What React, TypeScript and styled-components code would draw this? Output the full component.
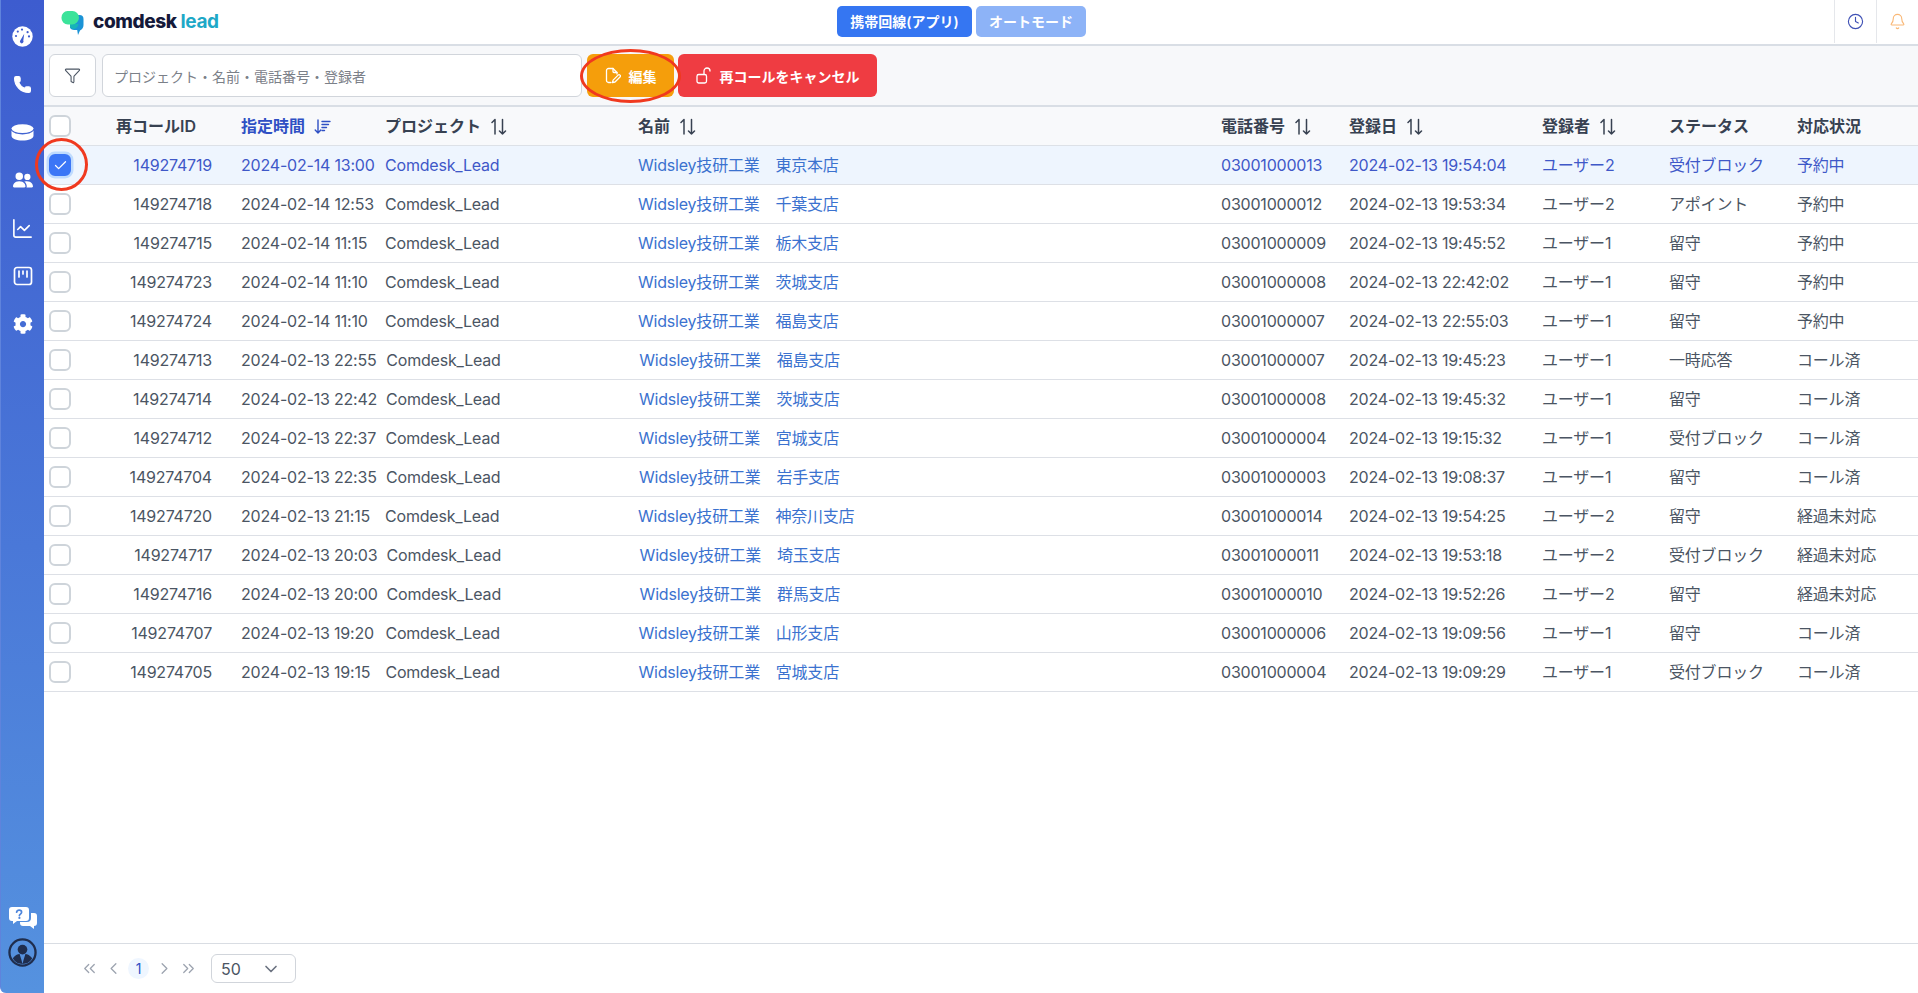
import React from "react";
import styled, { createGlobalStyle } from "styled-components";
import { Filter, Clock, Bell, Phone, ChartLine, ChevronDown, ChevronLeft, ChevronRight, ChevronsLeft, ChevronsRight, Check } from "lucide-react";
import { FaCog } from "react-icons/fa";

const FONT = `Inter, "Noto Sans CJK JP", sans-serif`;

const Global = createGlobalStyle`
  html, body { margin: 0; padding: 0; height: 100%; background: #4a4a22; }
  #root { height: 100%; }
  * { box-sizing: border-box; }
  body { font-family: ${FONT}; overflow: hidden; }
`;

const Page = styled.div`
  display: flex;
  height: 993px;
  width: 1918px;
  background: #fff;
`;

const Sidebar = styled.nav`
  width: 44px;
  flex: none;
  display: flex;
  flex-direction: column;
  align-items: center;
  padding: 13px 0 26px;
  background: linear-gradient(180deg, #3d5ccf 0%, #4a78d8 55%, #5592df 100%);
  border-left: 1px solid #5f83dc;
  border-bottom-left-radius: 6px;
  color: #fff;
`;

const NavItem = styled.div`
  height: 47.8px;
  width: 100%;
  display: flex;
  align-items: center;
  justify-content: center;
`;

const SideBottom = styled.div`
  margin-top: auto;
  display: flex;
  flex-direction: column;
  align-items: center;
  gap: 9px;
`;

const Main = styled.div`
  flex: 1;
  min-width: 0;
  display: flex;
  flex-direction: column;
  background: #fff;
`;

const Header = styled.header`
  height: 46px;
  flex: none;
  display: grid;
  grid-template-columns: 793px auto 1fr;
  align-items: center;
  background: #fff;
  border-bottom: 2px solid #d9dee5;
`;

const Logo = styled.div`
  display: flex;
  align-items: center;
  padding-left: 17px;
  gap: 9px;
  height: 100%;
`;

const LogoText = styled.span`
  font-family: "Inter", sans-serif;
  font-size: 19px;
  font-weight: 800;
  color: #14193a;
  letter-spacing: -0.4px;
  margin-top: -2px;
`;

const LogoLead = styled.span`
  color: #1ea8c7;
  font-weight: 700;
  margin-left: 4px;
`;

const ModeGroup = styled.div`
  display: flex;
  gap: 4px;
  margin-top: -2px;
`;

const ModeButton = styled.button<{ $muted?: boolean }>`
  height: 31px;
  padding: 0;
  width: ${(p) => (p.$muted ? "110px" : "135px")};
  border: 0;
  border-radius: 5px;
  background: ${(p) => (p.$muted ? "#8db3f7" : "#3576f2")};
  color: #fff;
  font-family: ${FONT};
  font-size: 14px;
  font-weight: 600;
`;

const HeaderRight = styled.div`
  justify-self: end;
  display: flex;
  height: 100%;
`;

const HeaderIcon = styled.div<{ $w: number }>`
  width: ${(p) => p.$w}px;
  height: 43px;
  display: flex;
  align-items: center;
  justify-content: center;
  border-left: 1px solid #e5e7eb;
`;

const Toolbar = styled.div`
  height: 61px;
  flex: none;
  display: flex;
  align-items: flex-start;
  padding: 8px 0 0 5px;
  background: #f7f8fa;
  border-bottom: 2px solid #d9dee5;
`;

const FilterButton = styled.button`
  width: 47px;
  height: 43px;
  display: flex;
  align-items: center;
  justify-content: center;
  padding: 0;
  border: 1px solid #d1d5db;
  border-radius: 6px;
  background: #fff;
  color: #4b5563;
`;

const SearchBox = styled.div`
  width: 480px;
  height: 43px;
  margin-left: 6px;
  padding-left: 11px;
  display: flex;
  align-items: center;
  border: 1px solid #d1d5db;
  border-radius: 6px;
  background: #fff;
  color: #7b8088;
  font-size: 14px;
`;

const ActionWrap = styled.div`
  position: relative;
  margin-left: 5px;
`;

const ActionButton = styled.button<{ $color: string; $w: number; $ml?: number }>`
  width: ${(p) => p.$w}px;
  height: 43px;
  margin-left: ${(p) => p.$ml ?? 0}px;
  padding: 0;
  display: flex;
  align-items: center;
  justify-content: center;
  gap: 8px;
  border: 0;
  border-radius: 6px;
  background: ${(p) => p.$color};
  color: #fff;
  font-family: ${FONT};
  font-size: 14px;
  font-weight: 600;
`;

const EditOval = styled.span`
  position: absolute;
  left: -7px;
  top: -5px;
  width: 101px;
  height: 54px;
  border: 3px solid #f0391f;
  border-radius: 50%;
  pointer-events: none;
`;

const TableArea = styled.div`
  flex: 1;
  min-height: 0;
`;

const COLS = "72px 125px 144px 253px 583px 128px 193px 127px 128px 1fr";

const HeadRow = styled.div`
  display: grid;
  grid-template-columns: ${COLS};
  height: 39px;
  align-items: center;
  background: #f8f9fb;
  border-bottom: 1px solid #dde1e7;
  color: #374151;
  font-size: 16px;
  line-height: 20px;
  font-weight: 600;
`;

const HeadCell = styled.div<{ $active?: boolean }>`
  display: flex;
  align-items: center;
  gap: ${(p) => (p.$active ? 9 : 10)}px;
  color: ${(p) => (p.$active ? "#2f50c4" : "#374151")};
`;

const Row = styled.div<{ $selected?: boolean }>`
  display: grid;
  grid-template-columns: ${COLS};
  height: 39px;
  align-items: center;
  background: ${(p) => (p.$selected ? "#eef5fe" : "#fff")};
  border-bottom: 1px solid #dde0e6;
  color: ${(p) => (p.$selected ? "#3f58c8" : "#4b5563")};
  font-size: 16px;
  line-height: 20px;
  letter-spacing: -0.2px;
`;

const CheckCell = styled.div`
  position: relative;
  padding-left: 5px;
  display: flex;
  align-items: center;
`;

const CheckBox = styled.span<{ $on?: boolean }>`
  width: 22px;
  height: 22px;
  display: flex;
  align-items: center;
  justify-content: center;
  border: 2px solid ${(p) => (p.$on ? "#3b76f6" : "#ced4da")};
  border-radius: 6px;
  background: ${(p) => (p.$on ? "#3b76f6" : "#fff")};
  box-shadow: ${(p) => (p.$on ? "0 0 0 2.5px #bfdbfe" : "none")};
  color: #fff;
`;

const CheckRing = styled.span`
  position: absolute;
  left: -9px;
  top: -16px;
  width: 53px;
  height: 53px;
  border: 3px solid #f0391f;
  border-radius: 50%;
  pointer-events: none;
`;

const IdCell = styled.div`
  text-align: right;
  padding-right: 29px;
`;

const Cell = styled.div<{ $shift?: number }>`
  padding-left: ${(p) => p.$shift ?? 0}px;
  white-space: nowrap;
`;

const NameLink = styled.span`
  color: #3b72cf;
`;

const Footer = styled.footer`
  height: 50px;
  flex: none;
  display: flex;
  align-items: center;
  padding: 0 0 0 35px;
  border-top: 1px solid #d9dde3;
  background: #fff;
  color: #9ca3af;
`;

const PageBtn = styled.span<{ $w: number }>`
  width: ${(p) => p.$w}px;
  display: flex;
  align-items: center;
  justify-content: center;
`;

const PageCurrent = styled.span`
  width: 21px;
  height: 21px;
  margin: 0 1px;
  border-radius: 50%;
  display: flex;
  align-items: center;
  justify-content: center;
  background: #eff6ff;
  color: #2f50c4;
  font-size: 14px;
`;

const PageSelect = styled.div`
  width: 85px;
  height: 29px;
  margin-left: 13px;
  padding: 0 14px 0 9px;
  display: flex;
  align-items: center;
  justify-content: space-between;
  border: 1px solid #d1d5db;
  border-radius: 6px;
  color: #4b5563;
  font-size: 16px;
`;

const SortAlt = () => (
  <svg width="16" height="17" viewBox="0 0 16 17" fill="none" stroke="currentColor" strokeWidth="1.5" strokeLinecap="round" strokeLinejoin="round">
    <path d="M4 16V1.500M1 4.500l3-3" />
    <path d="M11.500 1.500V16M8.500 13l3 3 3-3" />
  </svg>
);

const SortDown = () => (
  <svg width="17" height="17" viewBox="0 0 17 17" fill="none" stroke="currentColor" strokeWidth="1.4" strokeLinecap="round" strokeLinejoin="round">
    <path d="M4 2v13M1.200 12L4 15l2.800-3" />
    <path d="M8 3.500h8M8 6.500h6.500M8 9.500h4.500M8 12.500h2.500" />
  </svg>
);

const GaugeIcon = () => (
  <svg width="21" height="21" viewBox="0 0 21 21">
    <circle cx="10.500" cy="10.500" r="10.200" fill="#fff" />
    <path d="M12.800 5.200L11.900 12a1.800 1.800 0 1 1-2.700-.5L12.800 5.200z" fill="#3d5ccf" transform="translate(-0.600 2.600)" />
    <g fill="#3d5ccf">
      <circle cx="4" cy="10" r="1.100" />
      <circle cx="5.800" cy="5.600" r="1.100" />
      <circle cx="10" cy="3.600" r="1.100" />
      <circle cx="15.600" cy="6.200" r="1.100" />
      <circle cx="17" cy="10.400" r="1.100" />
    </g>
  </svg>
);

const DbIcon = () => (
  <svg width="23" height="17" viewBox="0 0 23 17" fill="#fff">
    <ellipse cx="11.500" cy="4.600" rx="11" ry="4.400" />
    <path d="M.5 6.600C2.200 9.200 6.400 10.400 11.500 10.400S20.800 9.200 22.500 6.600V11.800C22.500 14.600 17.600 16.600 11.500 16.600S.5 14.600.5 11.800Z" />
  </svg>
);

const UsersIcon = () => (
  <svg width="20" height="20" viewBox="0 0 16 16" fill="#fff" style={{ transform: "scaleX(-1)" }}>
    <path d="M7 14s-1 0-1-1 1-4 5-4 5 3 5 4-1 1-1 1zm4-6a3 3 0 1 0 0-6 3 3 0 0 0 0 6m-5.784 6A2.240 2.240 0 0 1 5 13c0-1.355.68-2.750 1.936-3.720A6.300 6.300 0 0 0 5 9c-4 0-5 3-5 4s1 1 1 1zM4.500 8a2.500 2.500 0 1 0 0-5 2.500 2.500 0 0 0 0 5" />
  </svg>
);

const KanbanIcon = () => (
  <svg width="20" height="20" viewBox="0 0 20 20" fill="none" stroke="#fff" strokeWidth="1.700" strokeLinecap="round">
    <rect x="1.500" y="1.500" width="17" height="17" rx="2.500" />
    <path d="M6 5v6M10 5v3M14 5v6" />
  </svg>
);

const HelpIcon = () => (
  <svg width="28" height="22" viewBox="0 0 28 22">
    <path d="M3 0h14a3 3 0 0 1 3 3v8a3 3 0 0 1-3 3H8l-4 3v-3H3a3 3 0 0 1-3-3V3a3 3 0 0 1 3-3z" fill="#fff" />
    <path d="M16 6h9a3 3 0 0 1 3 3v7a3 3 0 0 1-3 3v3l-4-3h-7a3 3 0 0 1-3-3v-1h7a4 4 0 0 0 4-4V6z" fill="#fff" />
    <path d="M7.600 5.200C7.900 3.900 9 3.200 10.200 3.200c1.400 0 2.400.8 2.400 2 0 1.900-2.200 1.800-2.200 3.400" fill="none" stroke="#4f86dc" strokeWidth="1.700" strokeLinecap="round" />
    <circle cx="10.400" cy="10.900" r="1.100" fill="#4f86dc" />
  </svg>
);

const AvatarIcon = () => (
  <svg width="29" height="29" viewBox="0 0 30 30">
    <circle cx="15" cy="15" r="13.500" fill="#5590dd" stroke="#1f2d4d" strokeWidth="2.400" />
    <circle cx="15" cy="12" r="5" fill="#1f2d4d" />
    <path d="M5 21c2-3 5-4.500 7-4.500L14 23l1 4-3-.5C9 26 6.500 24 5 21zM25 21c-2-3-5-4.500-7-4.500L16 23l-1 4 3-.5c3-.5 5.500-2.500 7-5.500z" fill="#1f2d4d" />
  </svg>
);

const LogoMark = () => (
  <svg width="23" height="25" viewBox="0 0 23 25">
    <path d="M10 5h8.500a4 4 0 0 1 4 4v6a6 6 0 0 1-3.500 5.400L17 25l-.8-5H13a5 5 0 0 1-4-2z" fill="#1b93d6" />
    <path d="M9 14h8.500a6 6 0 0 1-4.500 5A5 5 0 0 1 9 17z" fill="#17b3b8" />
    <path d="M6.500 1h5A6.500 6.500 0 0 1 18 7.500 7 7 0 0 1 11 14.500H7A6.500 6.500 0 0 1 .5 7.500 6.500 6.500 0 0 1 6.500 1z" fill="#3be39a" />
  </svg>
);

const FileEditIcon = () => (
  <svg width="16" height="17" viewBox="0 0 16 17" fill="none" stroke="currentColor" strokeWidth="1.300" strokeLinecap="round" strokeLinejoin="round">
    <path d="M6 15.500H3.500A2 2 0 0 1 1.500 13.500V3.500a2 2 0 0 1 2-2h4.500l4 4v1.500" />
    <path d="M8 1.500v3a1 1 0 0 0 1 1h3" />
    <path d="M7.500 15.500l.6-2.400 5-5a1.300 1.300 0 0 1 1.900 1.900l-5 5z" />
  </svg>
);

const UnlockIcon = () => (
  <svg width="16" height="17" viewBox="0 0 16 17" fill="none" stroke="currentColor" strokeWidth="1.300" strokeLinecap="round" strokeLinejoin="round">
    <rect x="1" y="7.500" width="9.500" height="8.500" rx="1.800" />
    <path d="M8 7.500V4a3 3 0 0 1 6 0" />
  </svg>
);

type R = {
  id: string; time: string; name: string; phone: string;
  date: string; user: string; status: string; state: string; shift?: number;
};

const rows: R[] = [
  { id: "149274719", time: "2024-02-14 13:00", name: "東京本店", phone: "03001000013", date: "2024-02-13 19:54:04", user: "ユーザー2", status: "受付ブロック", state: "予約中" },
  { id: "149274718", time: "2024-02-14 12:53", name: "千葉支店", phone: "03001000012", date: "2024-02-13 19:53:34", user: "ユーザー2", status: "アポイント", state: "予約中" },
  { id: "149274715", time: "2024-02-14 11:15", name: "栃木支店", phone: "03001000009", date: "2024-02-13 19:45:52", user: "ユーザー1", status: "留守", state: "予約中" },
  { id: "149274723", time: "2024-02-14 11:10", name: "茨城支店", phone: "03001000008", date: "2024-02-13 22:42:02", user: "ユーザー1", status: "留守", state: "予約中" },
  { id: "149274724", time: "2024-02-14 11:10", name: "福島支店", phone: "03001000007", date: "2024-02-13 22:55:03", user: "ユーザー1", status: "留守", state: "予約中" },
  { id: "149274713", time: "2024-02-13 22:55", name: "福島支店", phone: "03001000007", date: "2024-02-13 19:45:23", user: "ユーザー1", status: "一時応答", state: "コール済", shift: 1.3 },
  { id: "149274714", time: "2024-02-13 22:42", name: "茨城支店", phone: "03001000008", date: "2024-02-13 19:45:32", user: "ユーザー1", status: "留守", state: "コール済", shift: 1 },
  { id: "149274712", time: "2024-02-13 22:37", name: "宮城支店", phone: "03001000004", date: "2024-02-13 19:15:32", user: "ユーザー1", status: "受付ブロック", state: "コール済", shift: 0.4 },
  { id: "149274704", time: "2024-02-13 22:35", name: "岩手支店", phone: "03001000003", date: "2024-02-13 19:08:37", user: "ユーザー1", status: "留守", state: "コール済", shift: 1 },
  { id: "149274720", time: "2024-02-13 21:15", name: "神奈川支店", phone: "03001000014", date: "2024-02-13 19:54:25", user: "ユーザー2", status: "留守", state: "経過未対応" },
  { id: "149274717", time: "2024-02-13 20:03", name: "埼玉支店", phone: "03001000011", date: "2024-02-13 19:53:18", user: "ユーザー2", status: "受付ブロック", state: "経過未対応", shift: 1.6 },
  { id: "149274716", time: "2024-02-13 20:00", name: "群馬支店", phone: "03001000010", date: "2024-02-13 19:52:26", user: "ユーザー2", status: "留守", state: "経過未対応", shift: 1.6 },
  { id: "149274707", time: "2024-02-13 19:20", name: "山形支店", phone: "03001000006", date: "2024-02-13 19:09:56", user: "ユーザー1", status: "留守", state: "コール済", shift: 0.4 },
  { id: "149274705", time: "2024-02-13 19:15", name: "宮城支店", phone: "03001000004", date: "2024-02-13 19:09:29", user: "ユーザー1", status: "受付ブロック", state: "コール済", shift: 0.4 },
];

export default function App() {
  return (
    <>
      <Global />
      <Page>
        <Sidebar>
          <NavItem><GaugeIcon /></NavItem>
          <NavItem><Phone size={19} fill="#fff" strokeWidth={1.5} /></NavItem>
          <NavItem><DbIcon /></NavItem>
          <NavItem><UsersIcon /></NavItem>
          <NavItem><ChartLine size={23} strokeWidth={1.7} /></NavItem>
          <NavItem><KanbanIcon /></NavItem>
          <NavItem><FaCog size={20} /></NavItem>
          <SideBottom>
            <HelpIcon />
            <AvatarIcon />
          </SideBottom>
        </Sidebar>
        <Main>
          <Header>
            <Logo>
              <LogoMark />
              <LogoText>comdesk<LogoLead>lead</LogoLead></LogoText>
            </Logo>
            <ModeGroup>
              <ModeButton>携帯回線(アプリ)</ModeButton>
              <ModeButton $muted>オートモード</ModeButton>
            </ModeGroup>
            <HeaderRight>
              <HeaderIcon $w={42}><Clock size={17} color="#3f51b5" strokeWidth={1.6} /></HeaderIcon>
              <HeaderIcon $w={42}><Bell size={17} color="#f9b877" strokeWidth={1.6} /></HeaderIcon>
            </HeaderRight>
          </Header>
          <Toolbar>
            <FilterButton><Filter size={17} strokeWidth={1.5} /></FilterButton>
            <SearchBox>プロジェクト・名前・電話番号・登録者</SearchBox>
            <ActionWrap>
              <ActionButton $color="#f59e0b" $w={87}><FileEditIcon />編集</ActionButton>
              <EditOval />
            </ActionWrap>
            <ActionButton $color="#ef3c42" $w={199} $ml={4}><UnlockIcon />再コールをキャンセル</ActionButton>
          </Toolbar>
          <TableArea>
            <HeadRow>
              <CheckCell><CheckBox /></CheckCell>
              <HeadCell>再コールID</HeadCell>
              <HeadCell $active>指定時間<SortDown /></HeadCell>
              <HeadCell>プロジェクト<SortAlt /></HeadCell>
              <HeadCell>名前<SortAlt /></HeadCell>
              <HeadCell>電話番号<SortAlt /></HeadCell>
              <HeadCell>登録日<SortAlt /></HeadCell>
              <HeadCell>登録者<SortAlt /></HeadCell>
              <HeadCell>ステータス</HeadCell>
              <HeadCell>対応状況</HeadCell>
            </HeadRow>
            {rows.map((r, i) => (
              <Row key={r.id} $selected={i === 0}>
                <CheckCell>
                  <CheckBox $on={i === 0}>{i === 0 && <Check size={15} strokeWidth={2} />}</CheckBox>
                  {i === 0 && <CheckRing />}
                </CheckCell>
                <IdCell>{r.id}</IdCell>
                <Cell>{r.time}</Cell>
                <Cell $shift={r.shift}>Comdesk_Lead</Cell>
                <Cell $shift={r.shift}><NameLink>Widsley技研工業　{r.name}</NameLink></Cell>
                <Cell>{r.phone}</Cell>
                <Cell>{r.date}</Cell>
                <Cell>{r.user}</Cell>
                <Cell>{r.status}</Cell>
                <Cell>{r.state}</Cell>
              </Row>
            ))}
          </TableArea>
          <Footer>
            <PageBtn $w={20}><ChevronsLeft size={19} strokeWidth={1.6} /></PageBtn>
            <PageBtn $w={28}><ChevronLeft size={19} strokeWidth={1.6} /></PageBtn>
            <PageCurrent>1</PageCurrent>
            <PageBtn $w={28}><ChevronRight size={19} strokeWidth={1.6} /></PageBtn>
            <PageBtn $w={20}><ChevronsRight size={19} strokeWidth={1.6} /></PageBtn>
            <PageSelect>50<ChevronDown size={20} color="#6b7280" /></PageSelect>
          </Footer>
        </Main>
      </Page>
    </>
  );
}
